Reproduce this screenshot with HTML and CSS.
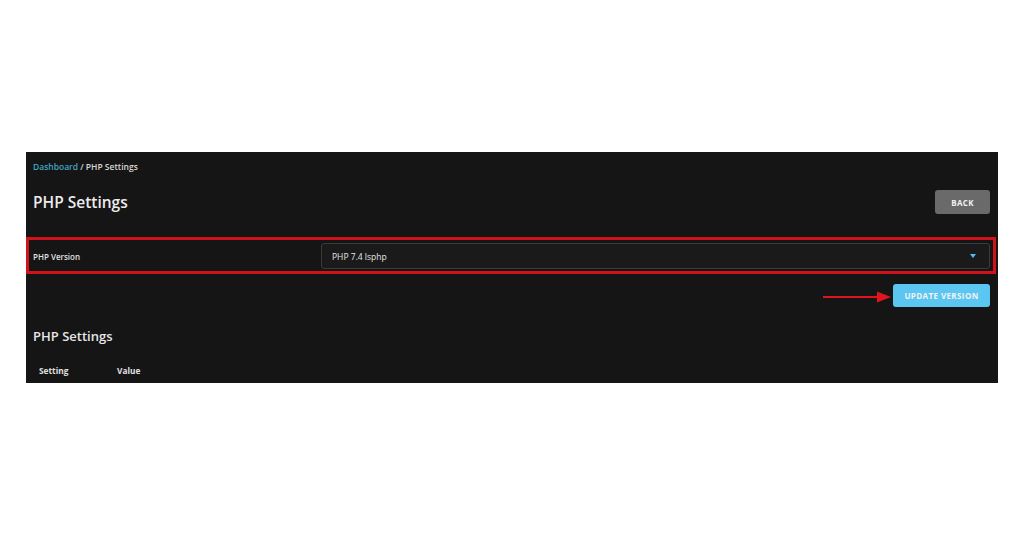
FILE: index.html
```html
<!DOCTYPE html>
<html>
<head>
<meta charset="utf-8">
<link rel="stylesheet" href="styles.css">
</head>
<body>
<div class="page">
  <div class="panel">
    <div class="breadcrumb"><a class="crumb-link">Dashboard</a> / PHP Settings</div>
    <div class="header">
      <h1 class="title">PHP Settings</h1>
      <button class="btn btn-back">BACK</button>
    </div>
    <div class="version-row">
      <label class="version-label">PHP Version</label>
      <div class="select">
        <span class="select-value">PHP 7.4 lsphp</span>
        <span class="caret"></span>
      </div>
    </div>
    <div class="actions">
      <svg class="arrow" width="68" height="12" viewBox="0 0 68 12">
        <line x1="0" y1="6" x2="56" y2="6" stroke="#e0141c" stroke-width="2.2"/>
        <polygon points="54,0.5 68,6 54,11.5" fill="#e0141c"/>
      </svg>
      <button class="btn btn-update">UPDATE VERSION</button>
    </div>
    <h2 class="subtitle">PHP Settings</h2>
    <div class="table-head">
      <span class="col-setting">Setting</span>
      <span class="col-value">Value</span>
    </div>
  </div>
</div>
</body>
</html>
```
FILE: styles.css
```css
html, body {
  margin: 0;
  padding: 0;
  background: #ffffff;
}
.page {
  padding-top: 152px;
  padding-left: 26px;
  height: 536px;
  box-sizing: border-box;
}
.panel {
  width: 972px;
  height: 231px;
  box-sizing: border-box;
  background: #151515;
  padding: 9px 8px 0 7px;
  font-family: "Open Sans", "Liberation Sans", sans-serif;
  color: #e4e4e4;
}
.breadcrumb {
  font-size: 8.5px;
  line-height: 12px;
  font-weight: 600;
  color: #d8d8d8;
}
.crumb-link {
  color: #3fa6c4;
  font-weight: 600;
}
.header {
  margin-top: 17px;
  height: 24px;
  display: flex;
  align-items: center;
  justify-content: space-between;
}
.title {
  margin: 0;
  font-size: 15.5px;
  line-height: 24px;
  font-weight: 600;
  color: #ececec;
}
.btn {
  border: none;
  border-radius: 3px;
  font-family: "Open Sans", "Liberation Sans", sans-serif;
  font-weight: 700;
  color: #f2f2f2;
  padding: 0;
  cursor: pointer;
}
.btn-back {
  width: 55px;
  height: 24px;
  background: #6a6a6a;
  font-size: 8px;
  letter-spacing: 0.3px;
}
.version-row {
  margin: 23px -6px 0 -7px;
  border: 3px solid #d2121b;
  padding: 3px 3px 2px 4px;
  display: flex;
  align-items: center;
  height: 26px;
  box-sizing: content-box;
}
.version-label {
  width: 288px;
  flex: none;
  font-size: 8px;
  font-weight: 600;
  color: #e0e0e0;
}
.select {
  flex: 1;
  height: 26px;
  box-sizing: border-box;
  border: 1px solid #3a3a3a;
  border-radius: 3px;
  background: #1a1a1a;
  display: flex;
  align-items: center;
  justify-content: space-between;
  padding: 0 13px 0 10px;
}
.select-value {
  font-size: 8.5px;
  font-weight: 500;
  color: #e6e6e6;
}
.caret {
  width: 0;
  height: 0;
  border-left: 3.5px solid transparent;
  border-right: 3.5px solid transparent;
  border-top: 4px solid #4fc0e8;
}
.actions {
  margin-top: 10px;
  display: flex;
  justify-content: flex-end;
  align-items: center;
  gap: 2px;
}
.arrow {
  display: block;
  margin-top: 3px;
}
.btn-update {
  width: 97px;
  height: 23px;
  background: #5cc6f2;
  font-size: 8px;
  letter-spacing: 0.4px;
}
.subtitle {
  margin: 20px 0 0 0;
  font-size: 13px;
  line-height: 18px;
  font-weight: 600;
  color: #e6e6e6;
}
.table-head {
  margin-top: 20px;
  display: flex;
  font-size: 8.3px;
  line-height: 12px;
  font-weight: 700;
  color: #e0e0e0;
  padding-left: 6px;
}
.col-setting {
  width: 78px;
}
```
